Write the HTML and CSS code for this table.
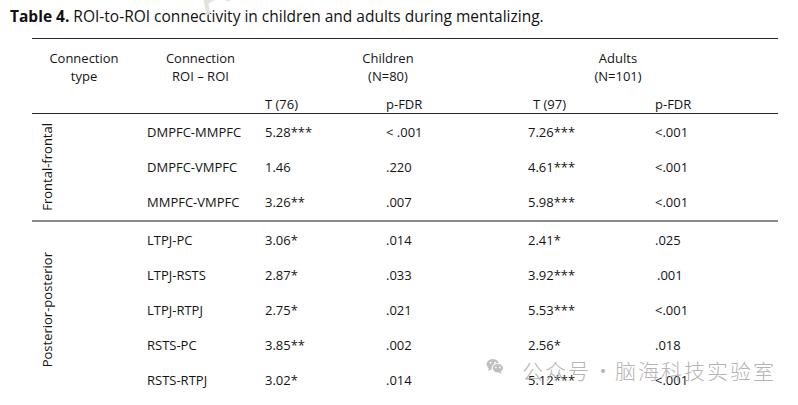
FILE: index.html
```html
<!DOCTYPE html>
<html>
<head>
<meta charset="utf-8">
<link rel="stylesheet" href="styles.css">
</head>
<body>
<div class="page">
  <div class="wm-top" aria-hidden="true">A</div>
  <h1 class="title"><b>Table 4.</b> ROI-to-ROI connectivity in children and adults during mentalizing.</h1>
  <div class="tbl">
    <div class="thead">
      <div class="hrow">
        <div class="h c1">Connection<br>type</div>
        <div class="h c2">Connection<br>ROI – ROI</div>
        <div class="h g-child">Children<br>(N=80)</div>
        <div class="h g-adult">Adults<br>(N=101)</div>
      </div>
      <div class="subrow">
        <div></div>
        <div></div>
        <div>T (76)</div>
        <div>p-FDR</div>
        <div class="s5">T (97)</div>
        <div>p-FDR</div>
      </div>
    </div>

    <div class="group g1">
      <div class="glabel"><span>Frontal-frontal</span></div>
      <div class="rows">
        <div class="row"><div class="roi">DMPFC-MMPFC</div><div>5.28***</div><div>&lt; .001</div><div>7.26***</div><div>&lt;.001</div></div>
        <div class="row"><div class="roi">DMPFC-VMPFC</div><div>1.46</div><div>.220</div><div>4.61***</div><div>&lt;.001</div></div>
        <div class="row"><div class="roi">MMPFC-VMPFC</div><div>3.26**</div><div>.007</div><div>5.98***</div><div>&lt;.001</div></div>
      </div>
    </div>

    <div class="group g2">
      <div class="glabel"><span>Posterior-posterior</span></div>
      <div class="rows">
        <div class="row"><div class="roi">LTPJ-PC</div><div>3.06*</div><div>.014</div><div>2.41*</div><div>.025</div></div>
        <div class="row"><div class="roi">LTPJ-RSTS</div><div>2.87*</div><div>.033</div><div>3.92***</div><div class="ind">.001</div></div>
        <div class="row"><div class="roi">LTPJ-RTPJ</div><div>2.75*</div><div>.021</div><div>5.53***</div><div>&lt;.001</div></div>
        <div class="row"><div class="roi">RSTS-PC</div><div>3.85**</div><div>.002</div><div>2.56*</div><div>.018</div></div>
        <div class="row"><div class="roi">RSTS-RTPJ</div><div>3.02*</div><div>.014</div><div>5.12***</div><div>&lt;.001</div></div>
      </div>
    </div>
  </div>

  <div class="wechat">
    <svg class="wx" width="18" height="16" viewBox="0 0 20 18">
      <ellipse cx="7.5" cy="7" rx="7" ry="6" fill="#b4b4b4"/>
      <path d="M3.2 10.8 L2.2 14.6 L6.4 12.4 Z" fill="#b4b4b4"/>
      <ellipse cx="13.2" cy="11.6" rx="6.4" ry="5.4" fill="#b4b4b4" stroke="#fff" stroke-width="1.3"/>
      <path d="M16.2 15.6 L17.8 17.6 L13.8 16.6 Z" fill="#b4b4b4"/>
      <circle cx="5" cy="5.4" r="1.05" fill="#fff"/>
      <circle cx="10" cy="5.4" r="1.05" fill="#fff"/>
      <circle cx="11" cy="10.6" r="0.95" fill="#fff"/>
      <circle cx="15.4" cy="10.6" r="0.95" fill="#fff"/>
    </svg>
    <span class="wtext">公众号<span class="dot">·</span>脑海科技实验室</span>
  </div>
</div>
</body>
</html>
```

FILE: styles.css
```css
html, body {
  margin: 0;
  padding: 0;
  background: #ffffff;
}

.page {
  position: relative;
  width: 798px;
  height: 405px;
  overflow: hidden;
  font-family: "Open Sans", "Liberation Sans", sans-serif;
  color: #141414;
}

.title {
  margin: 0;
  padding: 5px 0 0 10px;
  font-size: 15.5px;
  font-weight: 400;
  line-height: 22px;
  color: #111;
  white-space: nowrap;
}

.title b {
  font-weight: 700;
}

.tbl {
  margin: 11px 0 0 32px;
  width: 746px;
  border-top: 1px solid #2a2a2a;
  font-size: 13px;
}

.thead {
  border-bottom: 1px solid #2a2a2a;
}

.hrow {
  display: grid;
  grid-template-columns: 104px 122px 242px 250px;
  padding-top: 10px;
  line-height: 18px;
}

.h {
  text-align: center;
}

.c2 {
  margin-left: 7px;
}

.g-child {
  margin-left: 39px;
  padding-right: 21px;
}

.g-adult {
  padding-right: 14px;
}

.subrow {
  display: grid;
  grid-template-columns: 104px 129px 121px 142px 127px 123px;
  margin-top: 10px;
  line-height: 18px;
}

.s5 {
  padding-left: 5px;
}

.group {
  display: grid;
  grid-template-columns: 104px 1fr;
}

.g1 {
  padding-bottom: 1px;
  border-bottom: 2px solid #8a8a8a;
}

.glabel {
  display: flex;
  align-items: center;
  padding-left: 6px;
}

.glabel span {
  writing-mode: vertical-rl;
  transform: rotate(180deg);
  line-height: 18px;
  white-space: nowrap;
}

.row {
  display: grid;
  grid-template-columns: 129px 121px 142px 127px 123px;
  height: 35px;
  align-items: center;
  line-height: 18px;
}

.g2 .row {
  height: 35.2px;
}

.roi {
  padding-left: 11px;
}

.ind {
  padding-left: 2px;
}

.wm-top {
  position: absolute;
  left: 196px;
  top: -30px;
  font-size: 44px;
  font-family: "Liberation Sans", sans-serif;
  color: #e2e2e2;
  transform: rotate(-33deg);
  pointer-events: none;
}

.wechat {
  position: absolute;
  left: 486px;
  top: 358px;
  display: flex;
  align-items: flex-start;
  gap: 18px;
  opacity: 0.85;
}

.wx {
  margin-top: 0;
}

.wtext {
  font-family: "Noto Sans CJK SC", sans-serif;
  font-weight: 300;
  font-size: 21px;
  letter-spacing: 2px;
  line-height: 24px;
  color: #a9a9a9;
  white-space: nowrap;
}

.dot {
  display: inline-block;
  width: 24px;
  text-align: center;
  letter-spacing: 0;
}
```
